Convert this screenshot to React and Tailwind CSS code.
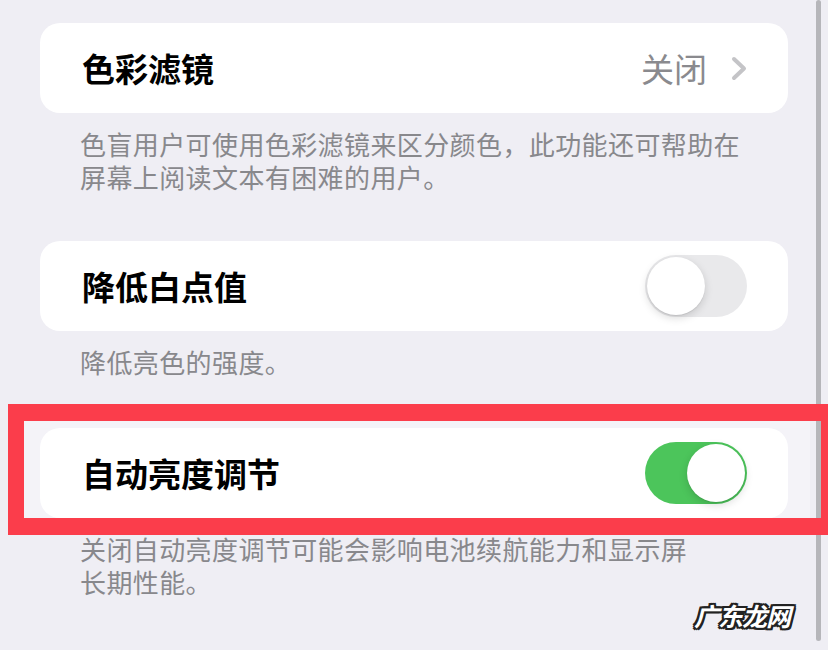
import React from "react";

const font = { fontFamily: '"Noto Sans CJK SC", "Noto Sans", sans-serif' };

const Toggle = ({ on }) => (
  <div
    className={`relative w-[102px] h-[62px] rounded-full flex items-center px-[2px] ${
      on ? "bg-[#4cc55b] justify-end" : "bg-[#e9e9eb] justify-start"
    }`}
  >
    <div className="w-[58px] h-[58px] rounded-full bg-white shadow-[0_3px_8px_rgba(0,0,0,0.15),0_1px_1px_rgba(0,0,0,0.08)]" />
  </div>
);

const Card = ({ title, children }) => (
  <div className="relative z-10 mx-[40px] h-[90px] bg-white rounded-[20px] flex items-center justify-between pl-[42px] pr-[41px]">
    <span className="text-[33px] font-bold text-black leading-none">{title}</span>
    {children}
  </div>
);

const Note = ({ children }) => (
  <p className="mt-[14px] px-[80px] text-[26px] leading-[33px] tracking-[0.4px] text-[#88888c]">
    {children}
  </p>
);

export default function App() {
  return (
    <div
      className="relative w-[828px] h-[650px] overflow-hidden bg-[#efeef4] pt-[23px]"
      style={font}
    >
      {/* scroll indicator */}
      <div className="absolute right-[7px] top-0 w-[5px] h-[641px] rounded-full bg-[#b6b6ba]" />

      {/* lighter tint inside the highlight */}
      <div className="absolute left-[24px] top-[421px] w-[786px] h-[97px] bg-[#f4f3f8]" />

      <Card title="色彩滤镜">
        <div className="flex items-center gap-[24px]">
          <span className="text-[33px] leading-none text-[#8a8a8e]">关闭</span>
          <svg width="16" height="25" viewBox="0 0 16 25" fill="none">
            <path
              d="M3 3 L13 12.5 L3 22"
              stroke="#c4c4c7"
              strokeWidth="4"
              strokeLinecap="round"
              strokeLinejoin="round"
            />
          </svg>
        </div>
      </Card>
      <Note>
        色盲用户可使用色彩滤镜来区分颜色，此功能还可帮助在
        <br />
        屏幕上阅读文本有困难的用户。
      </Note>

      <div className="mt-[48px]">
        <Card title="降低白点值">
          <Toggle on={false} />
        </Card>
      </div>
      <Note>降低亮色的强度。</Note>

      <div className="mt-[50px]">
        <Card title="自动亮度调节">
          <Toggle on />
        </Card>
      </div>
      <Note>
        关闭自动亮度调节可能会影响电池续航能力和显示屏
        <br />
        长期性能。
      </Note>

      {/* red highlight annotation */}
      <div className="absolute z-20 left-[8px] top-[404px] w-[830px] h-[131px] border-[17px] border-l-[16px] border-[#fb3d4b] pointer-events-none" />

      {/* watermark */}
      <div className="absolute z-20 left-[694px] top-[603px] text-[25px] font-bold italic leading-none text-white tracking-[-1px] [text-shadow:-2px_-2px_0_#222,2px_-2px_0_#222,-2px_2px_0_#222,2px_2px_0_#222,0_2px_0_#222,0_-2px_0_#222,2px_0_0_#222,-2px_0_0_#222]">
        广东龙网
      </div>
    </div>
  );
}
